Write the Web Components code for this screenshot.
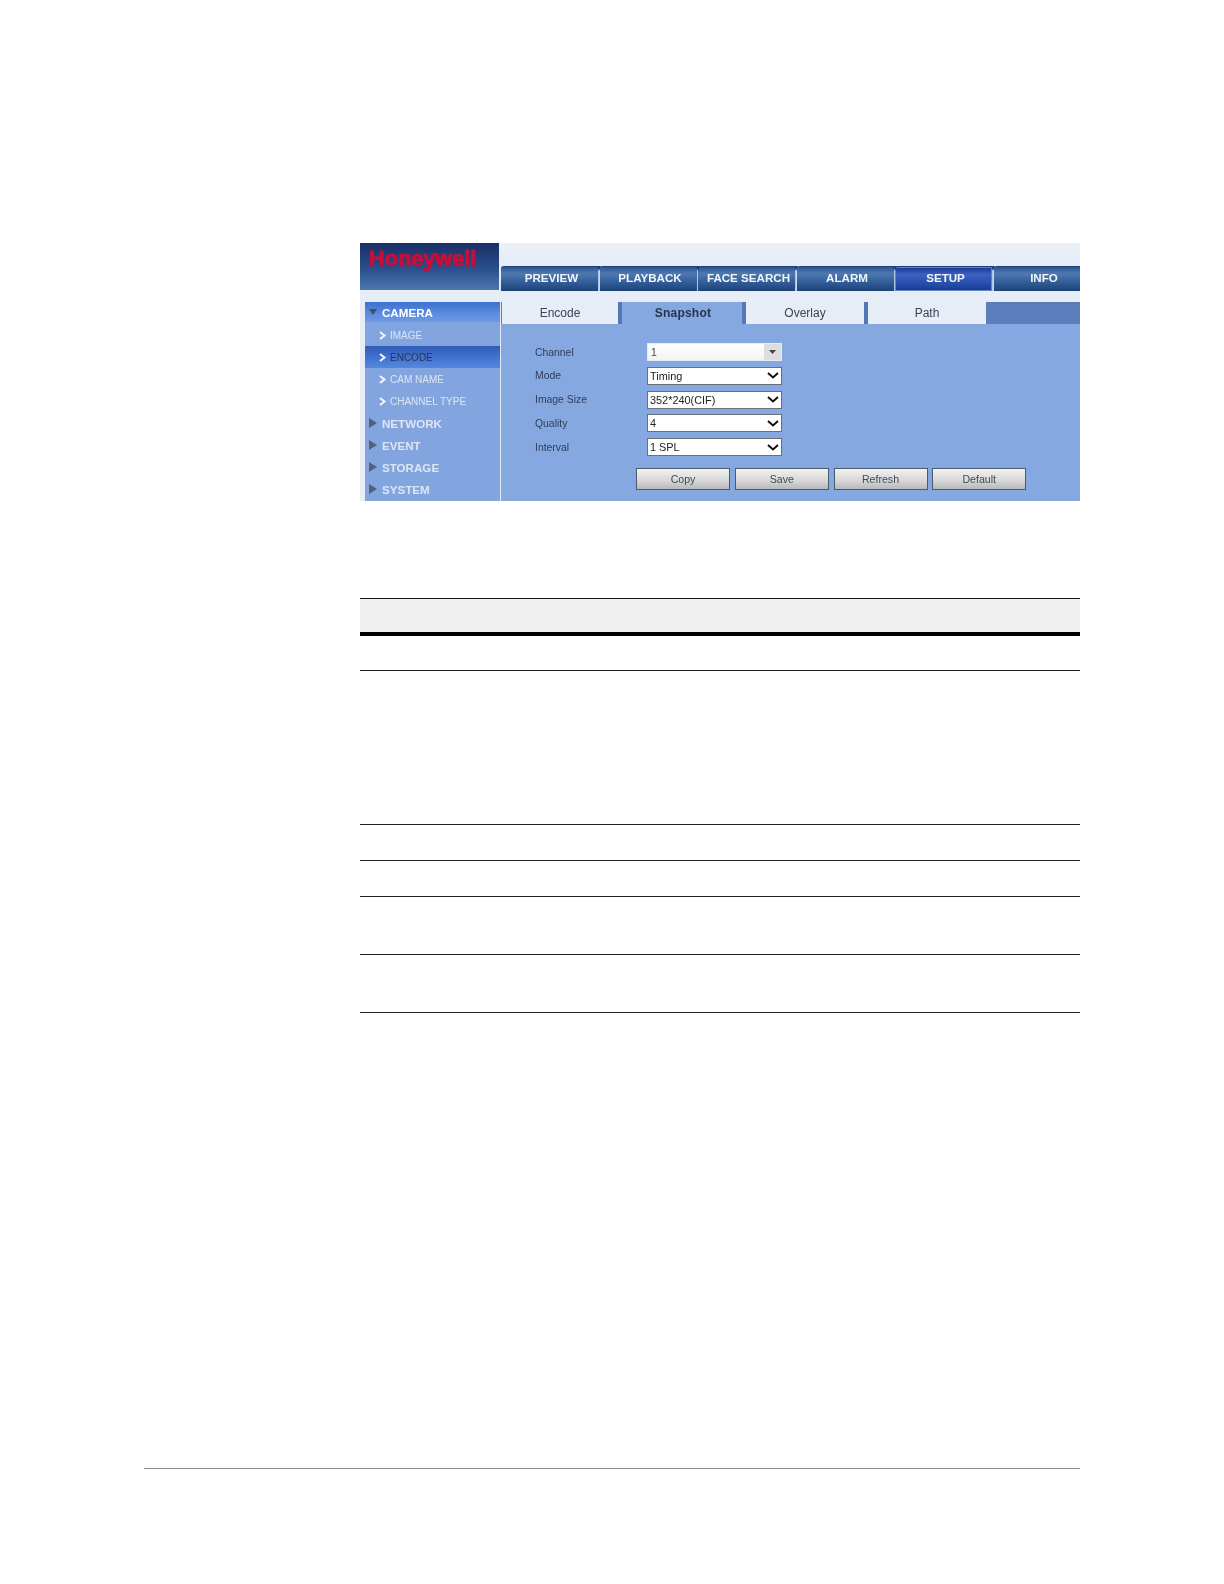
<!DOCTYPE html>
<html>
<head>
<meta charset="utf-8">
<title>Snapshot</title>
<style>
html, body { margin: 0; padding: 0; background: #fff; }
body { font-family: "Liberation Sans", Arial, sans-serif; }
</style>
</head>
<body>
<manual-page>
  <dvr-screen>
    <dvr-header slot="header">
      <nav-tab>PREVIEW</nav-tab>
      <nav-tab>PLAYBACK</nav-tab>
      <nav-tab>FACE SEARCH</nav-tab>
      <nav-tab>ALARM</nav-tab>
      <nav-tab active>SETUP</nav-tab>
      <nav-tab>INFO</nav-tab>
    </dvr-header>
    <side-menu slot="side">
      <side-item open active>CAMERA</side-item>
      <side-item sub>IMAGE</side-item>
      <side-item sub selected>ENCODE</side-item>
      <side-item sub>CAM NAME</side-item>
      <side-item sub>CHANNEL TYPE</side-item>
      <side-item>NETWORK</side-item>
      <side-item>EVENT</side-item>
      <side-item>STORAGE</side-item>
      <side-item>SYSTEM</side-item>
    </side-menu>
    <tab-strip slot="tabs">
      <page-tab style="width:116px">Encode</page-tab>
      <page-tab active style="width:128px">Snapshot</page-tab>
      <page-tab style="width:118px">Overlay</page-tab>
      <page-tab edge style="width:122px">Path</page-tab>
    </tab-strip>
    <form-panel slot="panel">
      <form-row label="Channel"><drop-box flat>1</drop-box></form-row>
      <form-row label="Mode"><drop-box>Timing</drop-box></form-row>
      <form-row label="Image Size"><drop-box>352*240(CIF)</drop-box></form-row>
      <form-row label="Quality"><drop-box>4</drop-box></form-row>
      <form-row label="Interval"><drop-box>1 SPL</drop-box></form-row>
      <div slot="buttons" style="display:flex;gap:4.75px">
        <gray-button>Copy</gray-button>
        <gray-button>Save</gray-button>
        <gray-button>Refresh</gray-button>
        <gray-button>Default</gray-button>
      </div>
    </form-panel>
  </dvr-screen>
  <doc-table></doc-table>
</manual-page>

<script>
function define(name, css, html, init) {
  customElements.define(name, class extends HTMLElement {
    constructor() {
      super();
      this.shadow = this.attachShadow({mode: 'open'});
      this.shadow.innerHTML = `<style>${css}</style>${html}`;
    }
    connectedCallback() {
      if (init) init(this);
    }
  });
}

define('manual-page', `
  :host { display: block; width: 1224px; height: 1584px; box-sizing: border-box; padding-top: 243px; overflow: hidden; }
  .body { margin-left: 360px; width: 720px; }
  .rule { margin: 455px 144px 0 144px; height: 1px; background: #8c8c8c; }
`, `
  <div class="body"><slot></slot></div>
  <div class="rule"></div>
`);

define('dvr-screen', `
  :host { display: grid; grid-template-columns: 141px 1fr; grid-template-rows: 48px 11px 22px 177px; height: 258px; background: #e7edf7; margin-bottom: 97px; }
  .h { grid-column: 1 / 3; grid-row: 1; min-width: 0; }
  .side { grid-column: 1; grid-row: 3 / 5; padding-left: 5px; }
  .tabs { grid-column: 2; grid-row: 3; min-width: 0; }
  .panel { grid-column: 2; grid-row: 4; }
`, `
  <div class="h"><slot name="header"></slot></div>
  <div class="side"><slot name="side"></slot></div>
  <div class="tabs"><slot name="tabs"></slot></div>
  <div class="panel"><slot name="panel"></slot></div>
`);

define('dvr-header', `
  :host { display: flex; height: 48px; }
  .logo { width: 139px; height: 47px; flex: none; box-sizing: border-box; padding: 4px 0 0 9px;
    background: linear-gradient(#1a2f66, #2a4f8c 55%, #4c76ae);
    color: #c4103a; font: bold 21.7px/24px "Liberation Sans", sans-serif;
    -webkit-text-stroke: 1px #c4103a; }
  .logo span { display: block; filter: blur(0.5px); }
  .nav { flex: 1; min-width: 0; display: flex; gap: 1.5px; padding: 22.5px 0 0 2px; background: linear-gradient(#ebf0f9, #e2e9f5); overflow: hidden; }
`, `
  <div class="logo"><span>Honeywell</span></div>
  <div class="nav"><slot></slot></div>
`);

define('nav-tab', `
  :host { position: relative; flex: none; width: 97px; height: 25.5px; display: flex; align-items: center; justify-content: center; box-sizing: border-box;
    padding: 0 0 2px 4px; border-radius: 3px 0 0 0; border-top: 1px solid #1d3f75;
    background: linear-gradient(#2b5590, #4f79b0 28%, #34609b 60%, #1d4278);
    box-shadow: 1.5px 0 0 #b4c4de;
    color: #f2f5fb; font: bold 11.6px "Liberation Sans", sans-serif; }
  :host([active]) { background: linear-gradient(#16378f, #3b61c2 32%, #2a50ae 65%, #173a92); box-shadow: inset 0 0 0 1px #5f86c8, 1.5px 0 0 #b4c4de; }
  :host::after { content: ""; position: absolute; z-index: 1; right: -3.25px; top: -1px; border-top: 5px solid #1d3f75; border-left: 2.5px solid transparent; border-right: 2.5px solid transparent; }
  .t { filter: blur(0.25px); }
`, `<span class="t"><slot></slot></span>`);

define('side-menu', `
  :host { display: block; width: 135px; height: 199px; background: #82a5e0; border-right: 1px solid #e4ebf6; overflow: hidden; }
`, `<slot></slot>`);

define('side-item', `
  :host { display: flex; align-items: center; height: 22px; box-sizing: border-box; padding: 0 0 0 4px; color: #dde5f3;
    font: bold 11.6px "Liberation Sans", sans-serif; }
  :host([active]) { height: 20px; margin-bottom: 2px; background: linear-gradient(#3c6fcf, #5a8be0 55%, #6f9ae5); color: #fff; }
  :host([sub]) { font: 10px "Liberation Sans", sans-serif; padding-left: 14px; }
  :host([selected]) { background: linear-gradient(#2f5cb5, #4576d4 60%, #5587dc); color: #26364f; }
  .ico { width: 13px; flex: none; display: flex; }
  :host([sub]) .ico { width: 11px; }
  .t { filter: blur(0.3px); }
  svg { display: block; }
`, `<span class="ico"></span><span class="t"><slot></slot></span>`, el => {
  let ico = el.shadow.querySelector('.ico');
  if (el.hasAttribute('sub')) {
    ico.innerHTML = '<svg width="8" height="9" viewBox="0 0 8 9"><path d="M1 1l4.500 3.500L1 8" fill="none" stroke="#f2f5fb" stroke-width="2"/></svg>';
  } else if (el.hasAttribute('open')) {
    ico.innerHTML = '<svg width="8" height="6" viewBox="0 0 8 6"><path d="M0 0h8L4 6z" fill="#454f60"/></svg>';
  } else {
    ico.innerHTML = '<svg width="8" height="10" viewBox="0 0 8 10"><path d="M0 0l8 5-8 5z" fill="#55617a"/></svg>';
  }
});

define('tab-strip', `
  :host { display: flex; height: 22px; padding-left: 1px; background: #5b7dbb; }
`, `<slot></slot>`);

define('page-tab', `
  :host { display: flex; align-items: center; justify-content: center; flex: none; height: 22px; box-sizing: border-box; background: #e7edf7;
    padding-bottom: 1px; color: #3c4352; font: 12px "Liberation Sans", sans-serif; }
  :host([active]) { background: #86a8e0; border-left: 4px solid #5577b5; border-right: 4px solid #5577b5; padding-left: 2px; font-weight: bold; letter-spacing: 0.2px; color: #26344e; }
  :host([edge]) { border-left: 4px solid #5577b5; }
  .t { filter: blur(0.25px); }
`, `<span class="t"><slot></slot></span>`);

define('form-panel', `
  :host { display: block; height: 177px; box-sizing: border-box; padding: 19px 0 0 34px; background: #86a8e0; }
  .rows { display: flex; flex-direction: column; gap: 5.75px; }
  .btns { margin: 12px 0 0 101px; }
`, `
  <div class="rows"><slot></slot></div>
  <div class="btns"><slot name="buttons"></slot></div>
`);

define('form-row', `
  :host { display: flex; align-items: center; height: 18px; }
  .l { width: 112px; color: #2f3e58; font: 10.4px "Liberation Sans", sans-serif; filter: blur(0.25px); }
`, `<span class="l"></span><slot></slot>`, el => {
  el.shadow.querySelector('.l').textContent = el.getAttribute('label');
});

define('drop-box', `
  :host { display: flex; align-items: center; width: 135px; height: 18px; box-sizing: border-box; background: #fff; border: 1px solid #6b6f78;
    padding-left: 2px; color: #222; font: 10.9px "Liberation Sans", sans-serif; }
  :host([flat]) { border: 1px solid #e4e9f2; padding-left: 3px; color: #444; font-size: 10.5px; background: linear-gradient(#fff, #f3f3f3); }
  .t { flex: 1; filter: blur(0.2px); }
  .a { width: 17px; height: 100%; display: flex; align-items: center; justify-content: center; }
  :host([flat]) .a { background: #dedede; }
`, `<span class="t"><slot></slot></span><span class="a"></span>`, el => {
  el.shadow.querySelector('.a').innerHTML = el.hasAttribute('flat')
    ? '<svg width="7" height="4" viewBox="0 0 7 4"><path d="M0 0h7L3.500 4z" fill="#444"/></svg>'
    : '<svg width="12" height="7" viewBox="0 0 12 7"><path d="M1 1l5 4.500L11 1" fill="none" stroke="#111" stroke-width="2"/></svg>';
});

define('gray-button', `
  :host { display: flex; align-items: center; justify-content: center; width: 94px; height: 22px; box-sizing: border-box;
    border: 1px solid #4e5a6c; background: linear-gradient(#f2f2f2, #d6d6d6 60%, #b8b8b8);
    color: #3f4a5c; font: 10.6px "Liberation Sans", sans-serif; }
  .t { filter: blur(0.25px); }
`, `<span class="t"><slot></slot></span>`);

define('doc-table', `
  :host { display: block; }
  .head { height: 34px; box-sizing: border-box; background: #f0f0f0; border-top: 1px solid #111; }
  .thick { height: 4px; background: #000; }
  .row { box-sizing: border-box; border-bottom: 1px solid #222; }
`, `
  <div class="head"></div>
  <div class="thick"></div>
  <div class="row" style="height:35px"></div>
  <div class="row" style="height:153.5px"></div>
  <div class="row" style="height:36px"></div>
  <div class="row" style="height:36px"></div>
  <div class="row" style="height:58px"></div>
  <div class="row" style="height:58px"></div>
`);
</script>
</body>
</html>
